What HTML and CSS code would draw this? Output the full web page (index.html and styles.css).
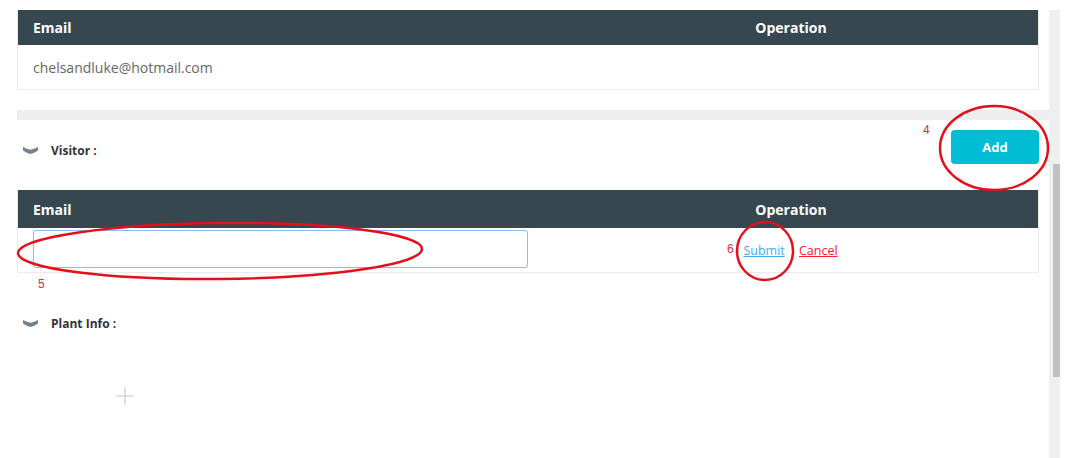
FILE: index.html
```html
<!DOCTYPE html>
<html>
<head>
<meta charset="utf-8">
<link rel="stylesheet" href="styles.css">
</head>
<body>
<div class="screen">
  <div class="main">
    <div class="table">
      <div class="thead">
        <div class="th th-email">Email</div>
        <div class="th th-op">Operation</div>
      </div>
      <div class="trow trow-data">
        <div class="td td-email">chelsandluke@hotmail.com</div>
        <div class="td td-op"></div>
      </div>
    </div>

    <div class="band"></div>

    <div class="section-head visitor-head">
      <div class="label">
        <svg class="chev" width="15" height="7" viewBox="0 0 15 7"><path d="M0 0 Q4 2.2 7.5 2.8 Q11 2.2 15 0 L15 3.4 Q11 6.2 7.5 7 Q4 6.2 0 3.4 Z" fill="#72828f"/></svg>
        <span>Visitor :</span>
      </div>
      <button class="btn-add">Add</button>
    </div>

    <div class="table table2">
      <div class="thead thead2">
        <div class="th th-email">Email</div>
        <div class="th th-op">Operation</div>
      </div>
      <div class="trow trow-edit">
        <div class="td td-email"><input class="email-input" type="text"></div>
        <div class="td td-op">
          <a class="link link-submit">Submit</a>
          <a class="link link-cancel">Cancel</a>
        </div>
      </div>
    </div>

    <div class="section-head plant-head">
      <div class="label">
        <svg class="chev" width="15" height="7" viewBox="0 0 15 7"><path d="M0 0 Q4 2.2 7.5 2.8 Q11 2.2 15 0 L15 3.4 Q11 6.2 7.5 7 Q4 6.2 0 3.4 Z" fill="#72828f"/></svg>
        <span>Plant Info :</span>
      </div>
    </div>

    <div class="upload">
      <svg width="18" height="18" viewBox="0 0 18 18"><path d="M9 0 V18 M0 9 H18" stroke="#d9d9d9" stroke-width="1.6"/></svg>
    </div>
  </div>
  <div class="scrollbar"><div class="thumb"></div></div>
</div>

<svg class="annot" width="1078" height="458" viewBox="0 0 1078 458">
  <g fill="none" stroke="#e3101c" stroke-width="2.5">
    <ellipse cx="994" cy="148" rx="54" ry="42"/>
    <ellipse cx="220" cy="251" rx="202" ry="28" transform="rotate(-0.6 220 251)"/>
    <ellipse cx="765" cy="251" rx="28" ry="29"/>
  </g>
  <g fill="#e8282e" font-family="Liberation Sans, sans-serif" font-size="12">
    <text x="923" y="134">4</text>
    <text x="38" y="288">5</text>
    <text x="727" y="253">6</text>
  </g>
</svg>
</body>
</html>
```

FILE: styles.css
```css
* { box-sizing: border-box; }
html, body { margin: 0; padding: 0; background: #fff; }
body {
  font-family: "Open Sans", "Noto Sans", sans-serif;
  width: 1078px;
  height: 458px;
  overflow: hidden;
  position: relative;
}
.screen {
  display: flex;
  padding-top: 10px;
  height: 458px;
}
.main {
  width: 1049px;
  padding-left: 17px;
  flex: none;
}
.table {
  width: 1022px;
  border: 1px solid #ebebeb;
  border-top: 0;
}
.thead {
  display: grid;
  grid-template-columns: 522px 1fr;
  background: #37474f;
  height: 35px;
  align-items: center;
  color: #fff;
  font-weight: 700;
  font-size: 14px;
}
.thead2 { height: 38px; }
.th-email { padding-left: 15px; }
.th-op { text-align: center; padding-left: 4px; }
.trow {
  display: grid;
  grid-template-columns: 522px 1fr;
  align-items: center;
}
.trow-data { height: 44px; }
.td-email { padding-left: 15px; }
.trow-data .td-email {
  font-size: 14px;
  color: #666;
}
.td-op { text-align: center; padding-left: 3px; }
.band {
  margin-top: 20px;
  height: 10px;
  background: #eeeeee;
  width: 1032px;
}
.section-head {
  display: flex;
  align-items: center;
  justify-content: space-between;
  height: 34px;
}
.visitor-head { margin-top: 10px; }
.plant-head { margin-top: 30px; }
.label {
  display: flex;
  align-items: center;
  padding-left: 6px;
  margin-top: 6px;
  font-size: 12px;
  font-weight: 700;
  color: #333;
}
.chev { margin-right: 13px; margin-top: 1px; }
.btn-add {
  width: 88px;
  height: 34px;
  margin-right: 10px;
  border: 0;
  border-radius: 4px;
  background: #00bcd4;
  color: #fff;
  font-family: "Open Sans", sans-serif;
  font-weight: 700;
  font-size: 13px;
  padding: 0;
}
.table2 { margin-top: 26px; }
.trow-edit {
  padding: 2px 0 4px;
}
.email-input {
  display: block;
  width: 495px;
  height: 38px;
  border: 1px solid #86bdf3;
  border-radius: 3px;
  outline: none;
  margin: 0;
}
.link {
  font-size: 12.5px;
  text-decoration: underline;
  cursor: pointer;
}
.link-submit { color: #3eaef0; margin-right: 10px; }
.link-cancel { color: #f5222d; }
.upload {
  margin: 50px 0 0 99px;
  width: 18px;
  height: 18px;
}
.upload svg { display: block; }
.scrollbar {
  width: 11px;
  flex: none;
  background: #efefef;
  height: 448px;
  padding-top: 154px;
  padding-left: 4px;
}
.thumb {
  width: 7px;
  height: 213px;
  background: #c1c1c1;
}
.annot {
  position: absolute;
  left: 0;
  top: 0;
  pointer-events: none;
}
```
